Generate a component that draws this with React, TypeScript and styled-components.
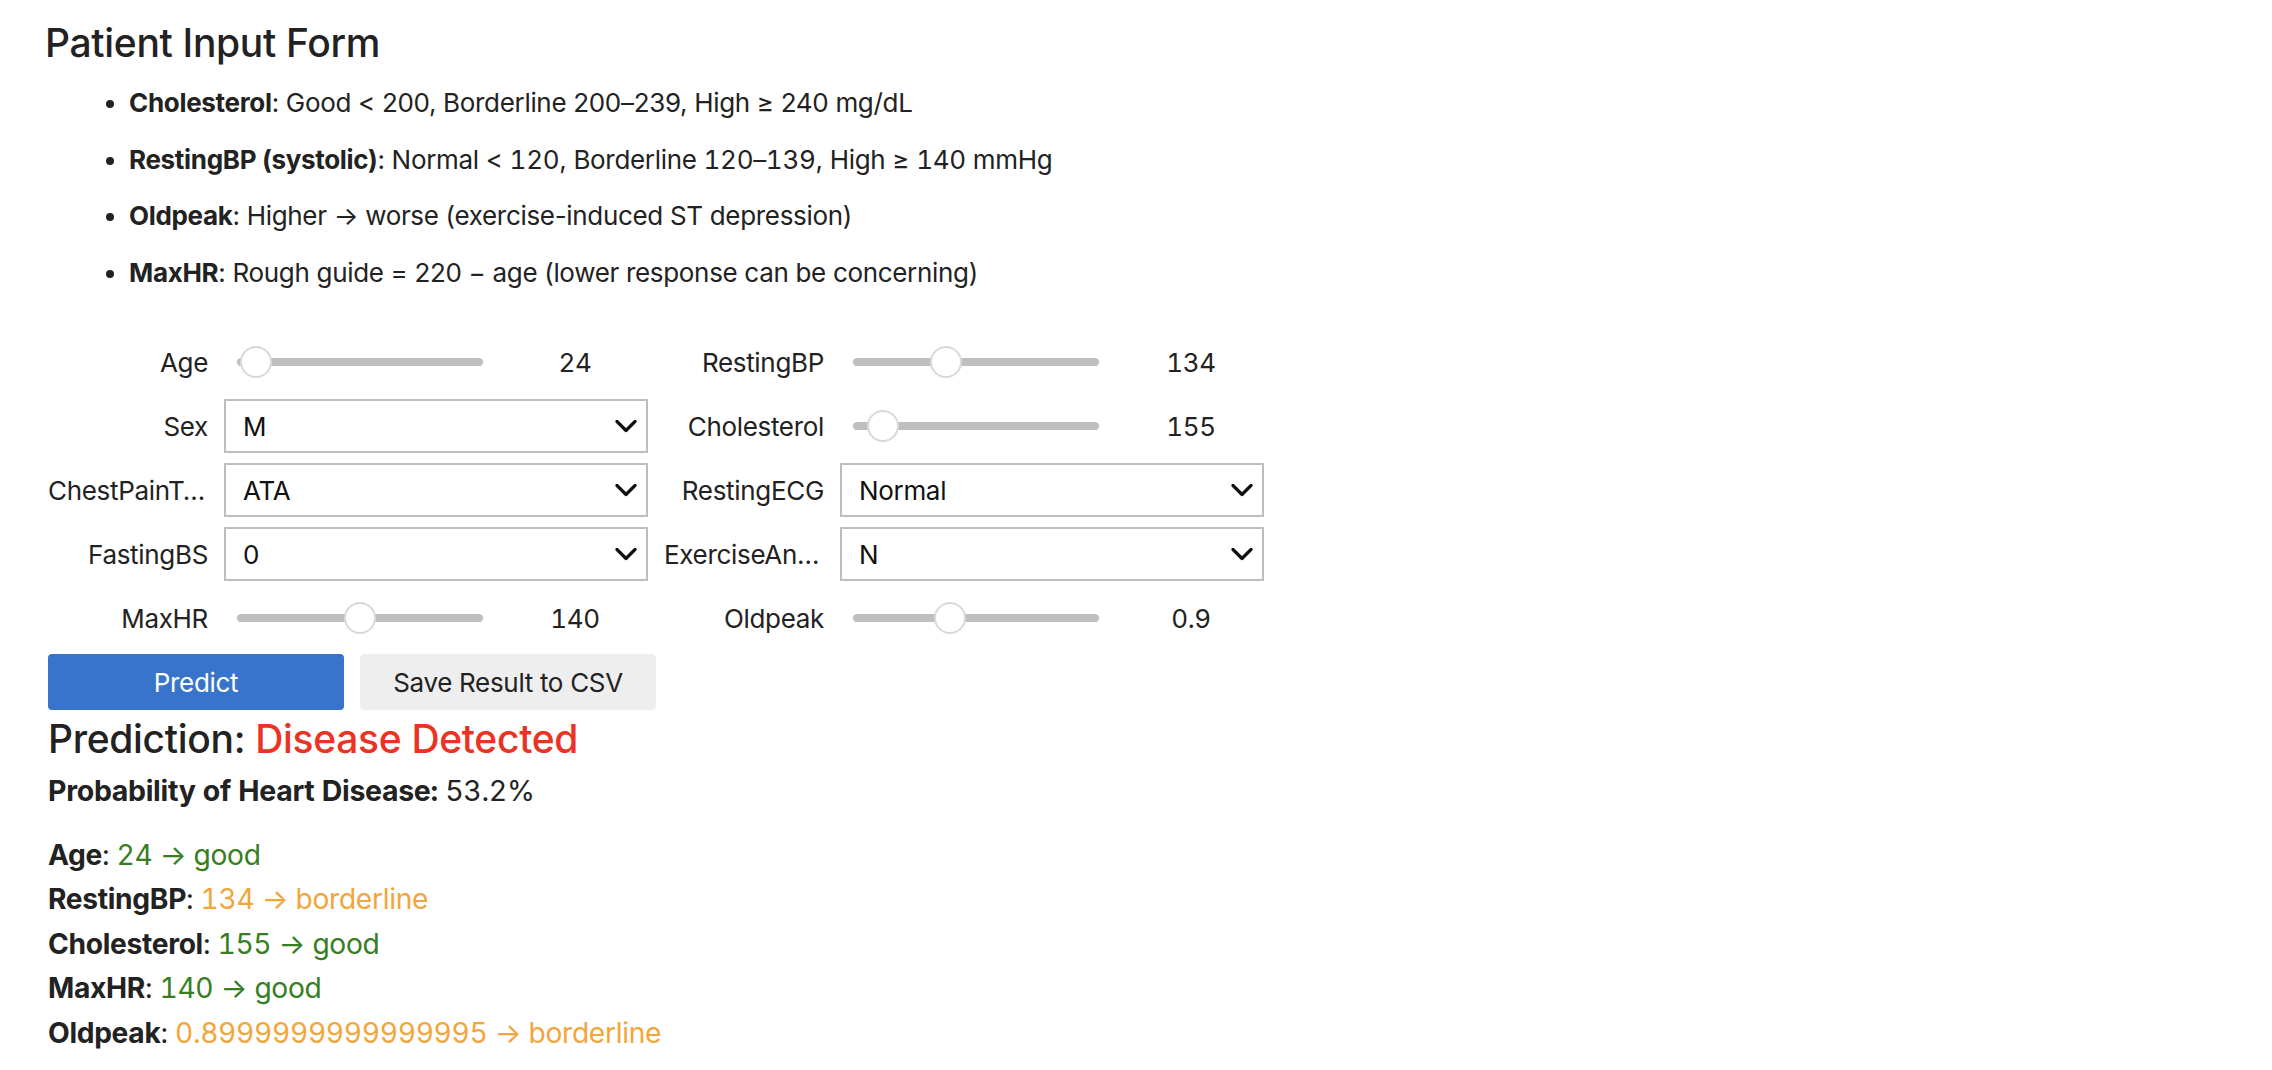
import React from "react";
import styled, { createGlobalStyle } from "styled-components";

const GlobalStyle = createGlobalStyle`
  html, body { margin: 0; padding: 0; background: #ffffff; }
  body {
    font-family: Inter, "Noto Sans", "Liberation Sans", sans-serif;
    color: #222222;
    letter-spacing: -0.02em;
  }
  * { box-sizing: border-box; }
`;

const Page = styled.main`
  display: flex;
  flex-direction: column;
  padding: 19px 0 0 48px;
`;

const Title = styled.h3`
  margin: 0 0 0 -3px;
  font-size: 39px;
  line-height: 48px;
  font-weight: 500;
`;

const Guide = styled.ul`
  margin: 16px 0 0 0;
  padding-left: 81px;
  display: flex;
  flex-direction: column;
  gap: 17.5px;
`;

const GuideItem = styled.li`
  font-size: 26px;
  line-height: 39px;
  b { font-weight: 700; }
`;

const Num = styled.span`
  font-variant-numeric: tabular-nums;
`;

const Form = styled.div`
  display: flex;
  gap: 16px;
  margin-top: 38.5px;
`;

const Column = styled.div`
  width: 600px;
  display: flex;
  flex-direction: column;
`;

const Field = styled.div`
  height: 64px;
  display: flex;
  align-items: center;
`;

const FieldLabel = styled.label`
  flex: 0 0 160px;
  margin-right: 16px;
  text-align: right;
  font-size: 26px;
  white-space: nowrap;
  overflow: hidden;
  text-overflow: ellipsis;
`;

const SelectWrap = styled.div`
  position: relative;
  width: 424px;
  height: 54px;
`;

const Select = styled.select`
  appearance: none;
  -webkit-appearance: none;
  width: 100%;
  height: 100%;
  border: 2px solid #bdbdbd;
  border-radius: 0;
  background: #ffffff;
  padding: 0 50px 0 17px;
  font-family: inherit;
  font-size: 26px;
  letter-spacing: inherit;
  color: #111111;
  outline: none;
`;

const Chevron = styled.svg`
  position: absolute;
  right: 11px;
  top: 50%;
  width: 22px;
  height: 13px;
  transform: translateY(-50%);
  pointer-events: none;
`;

const SliderTrack = styled.div`
  position: relative;
  margin-left: 13px;
  width: 246px;
  height: 32px;
  display: flex;
  align-items: center;
`;

const TrackBar = styled.div`
  width: 100%;
  height: 8px;
  border-radius: 4px;
  background: #bfbfbf;
`;

const Thumb = styled.div`
  position: absolute;
  top: 0;
  width: 32px;
  height: 32px;
  margin-left: -16px;
  border-radius: 50%;
  background: #ffffff;
  border: 2px solid #d9d9d9;
`;

const Readout = styled.span`
  margin-left: 28px;
  width: 128px;
  text-align: center;
  font-size: 26px;
  font-variant-numeric: tabular-nums;
`;

const Actions = styled.div`
  display: flex;
  gap: 16px;
  padding: 4px 0;
`;

const Button = styled.button<{ $primary?: boolean }>`
  width: 296px;
  height: 56px;
  border: none;
  border-radius: 4px;
  font-family: inherit;
  letter-spacing: inherit;
  font-size: 26px;
  background: ${(p) => (p.$primary ? "#3874cb" : "#eeeeee")};
  color: ${(p) => (p.$primary ? "#ffffff" : "#222222")};
`;

const Prediction = styled.h3`
  margin: 1px 0 0 0;
  font-size: 39px;
  line-height: 48px;
  font-weight: 500;
`;

const Tone = styled.span<{ $tone: "good" | "borderline" | "bad" }>`
  color: ${(p) =>
    p.$tone === "good" ? "#377e22" : p.$tone === "borderline" ? "#f2a53a" : "#ea3323"};
`;

const Probability = styled.p`
  margin: 7.5px 0 0 0;
  font-size: 28.5px;
  line-height: 39px;
  font-variant-numeric: tabular-nums;
  b { font-weight: 700; }
`;

const Results = styled.div`
  margin-top: 23px;
  display: flex;
  flex-direction: column;
  font-size: 28.2px;
  line-height: 44.6px;
  font-variant-numeric: tabular-nums;
  b { font-weight: 700; }
`;

type SliderSpec = { kind: "slider"; label: string; min: number; max: number; value: number; text: string };
type SelectSpec = { kind: "select"; label: string; value: string; options: string[] };
type Spec = SliderSpec | SelectSpec;

const left: Spec[] = [
  { kind: "slider", label: "Age", min: 20, max: 72, value: 24, text: "24" },
  { kind: "select", label: "Sex", value: "M", options: ["M", "F"] },
  { kind: "select", label: "ChestPainType", value: "ATA", options: ["ATA", "NAP", "ASY", "TA"] },
  { kind: "select", label: "FastingBS", value: "0", options: ["0", "1"] },
  { kind: "slider", label: "MaxHR", min: 60, max: 220, value: 140, text: "140" },
];

const right: Spec[] = [
  { kind: "slider", label: "RestingBP", min: 100, max: 190, value: 134, text: "134" },
  { kind: "slider", label: "Cholesterol", min: 100, max: 550, value: 155, text: "155" },
  { kind: "select", label: "RestingECG", value: "Normal", options: ["Normal", "ST", "LVH"] },
  { kind: "select", label: "ExerciseAngina", value: "N", options: ["N", "Y"] },
  { kind: "slider", label: "Oldpeak", min: -1, max: 3.8, value: 0.9, text: "0.9" },
];

function FieldRow({ spec }: { spec: Spec }) {
  return (
    <Field>
      <FieldLabel title={spec.label}>{spec.label}</FieldLabel>
      {spec.kind === "select" ? (
        <SelectWrap>
          <Select defaultValue={spec.value}>
            {spec.options.map((o) => (
              <option key={o} value={o}>
                {o}
              </option>
            ))}
          </Select>
          <Chevron viewBox="0 0 22 13">
            <path d="M2 2 L11 11 L20 2" fill="none" stroke="#111" strokeWidth="3.2" strokeLinecap="round" strokeLinejoin="round" />
          </Chevron>
        </SelectWrap>
      ) : (
        <>
          <SliderTrack>
            <TrackBar />
            <Thumb style={{ left: `${((spec.value - spec.min) / (spec.max - spec.min)) * 100}%` }} />
          </SliderTrack>
          <Readout>{spec.text}</Readout>
        </>
      )}
    </Field>
  );
}

const results: { label: string; value: string; tone: "good" | "borderline" }[] = [
  { label: "Age", value: "24 → good", tone: "good" },
  { label: "RestingBP", value: "134 → borderline", tone: "borderline" },
  { label: "Cholesterol", value: "155 → good", tone: "good" },
  { label: "MaxHR", value: "140 → good", tone: "good" },
  { label: "Oldpeak", value: "0.8999999999999995 → borderline", tone: "borderline" },
];

export default function App() {
  return (
    <>
      <GlobalStyle />
      <Page>
        <Title>Patient Input Form</Title>
        <Guide>
          <GuideItem>
            <b>Cholesterol</b>: Good &lt; 200, Borderline 200–239, High ≥ 240 mg/dL
          </GuideItem>
          <GuideItem>
            <b>RestingBP (systolic)</b>: Normal &lt; <Num>120</Num>, Borderline <Num>120</Num>–<Num>139</Num>, High ≥{" "}
            <Num>140</Num> mmHg
          </GuideItem>
          <GuideItem>
            <b>Oldpeak</b>: Higher → worse (exercise-induced ST depression)
          </GuideItem>
          <GuideItem>
            <b>MaxHR</b>: Rough guide = 220 − age (lower response can be concerning)
          </GuideItem>
        </Guide>
        <Form>
          <Column>
            {left.map((s) => (
              <FieldRow key={s.label} spec={s} />
            ))}
          </Column>
          <Column>
            {right.map((s) => (
              <FieldRow key={s.label} spec={s} />
            ))}
          </Column>
        </Form>
        <Actions>
          <Button $primary>Predict</Button>
          <Button>Save Result to CSV</Button>
        </Actions>
        <Prediction>
          Prediction: <Tone $tone="bad">Disease Detected</Tone>
        </Prediction>
        <Probability>
          <b>Probability of Heart Disease:</b> 53.2%
        </Probability>
        <Results>
          {results.map((r) => (
            <div key={r.label}>
              <b>{r.label}</b>: <Tone $tone={r.tone}>{r.value}</Tone>
            </div>
          ))}
        </Results>
      </Page>
    </>
  );
}
